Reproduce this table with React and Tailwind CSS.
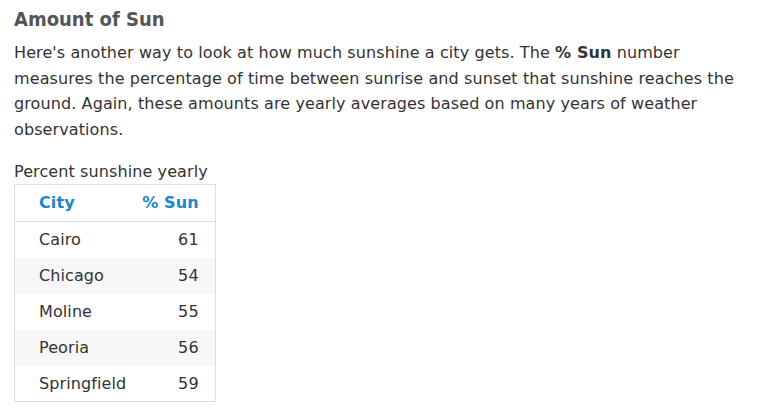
import React from 'react'

const rows = [
  ['Cairo', 61],
  ['Chicago', 54],
  ['Moline', 55],
  ['Peoria', 56],
  ['Springfield', 59],
]

export default function App() {
  return (
    <div className="min-h-[412px] bg-white px-[14px] pt-[6px] text-[#333] font-['DejaVu_Sans',Verdana,sans-serif]">
      <h2 className="text-[20px] leading-[26px] font-bold text-[#555] font-['DejaVu_Sans_Condensed','DejaVu_Sans',sans-serif]">
        Amount of Sun
      </h2>
      <p className="mt-[8px] text-[16px] leading-[25.6px] tracking-[0.1px] max-w-[720px]">
        Here's another way to look at how much sunshine a city gets. The <b>% Sun</b> number
        measures the percentage of time between sunrise and sunset that sunshine reaches the
        ground. Again, these amounts are yearly averages based on many years of weather
        observations.
      </p>
      <div className="mt-[18px] text-[16px] leading-[24px] tracking-[0.1px]">Percent sunshine yearly</div>
      <table className="border border-[#ddd] border-collapse text-[16px] tracking-[0.1px]">
        <thead>
          <tr className="border-b border-[#ddd]">
            <th className="text-left font-bold text-[#1a86cc] pl-[24px] pr-[8px] h-[37px]">City</th>
            <th className="text-right font-bold text-[#1a86cc] pl-[8px] pr-[16px] h-[37px]">% Sun</th>
          </tr>
        </thead>
        <tbody>
          {rows.map(([city, v], i) => (
            <tr key={city} className={i % 2 === 1 ? 'bg-[#f7f7f7]' : 'bg-white'}>
              <td className="pl-[24px] pr-[8px] h-[36px]">{city}</td>
              <td className="text-right pl-[8px] pr-[16px] h-[36px]">{v}</td>
            </tr>
          ))}
        </tbody>
      </table>
    </div>
  )
}
